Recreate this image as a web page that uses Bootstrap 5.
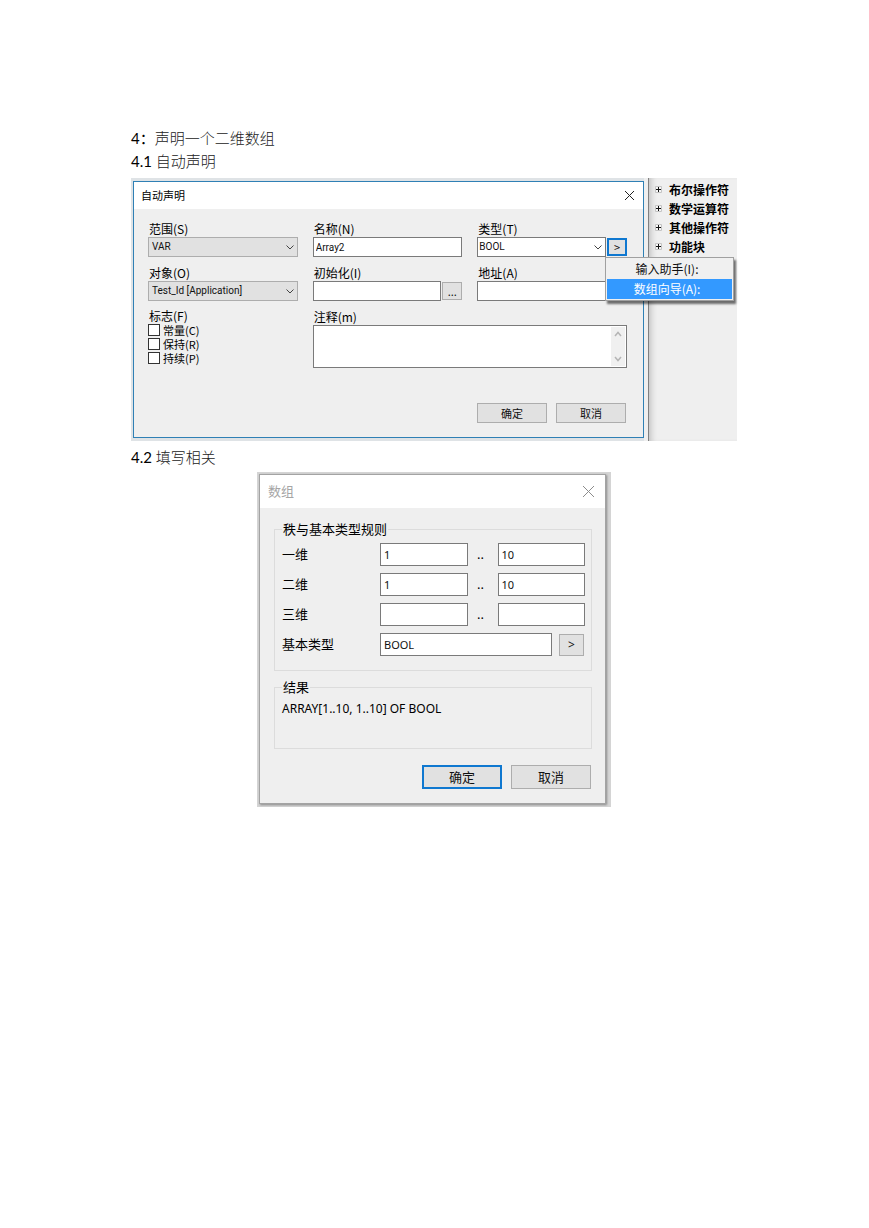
<!DOCTYPE html>
<html lang="zh-CN">
<head>
<meta charset="utf-8">
<meta name="viewport" content="width=device-width, initial-scale=1">
<title>声明一个二维数组</title>
<link href="https://cdn.jsdelivr.net/npm/bootstrap@5.3.0/dist/css/bootstrap.min.css" rel="stylesheet">
<style>
  body { background: #fff; color: #000; font-family: "Noto Sans", "Noto Sans CJK SC", sans-serif; font-size: 12px; }
  .doc-page { max-width: 869px; padding: 127px 132px 127px 131px; }
  .doc-line { font-family: Lato, "Noto Sans CJK SC", sans-serif; font-size: 15px; line-height: 23px; font-weight: 400; margin: 0; }
  .doc-line span { font-weight: 300; color: #222; }
  .doc-line.after-shot { margin-top: 5px; }

  .win input, .win select, .win textarea, .win button { font-family: inherit; color: #111; border-radius: 0; }
  .win label, .win legend { color: #000; }
  .win-title { background: #fff; }
  .win-x { border: 0; background: none; padding: 0; line-height: 0; }
  .push { background: #e1e1e1; border: 1px solid #adadad; padding: 0; }
  .push.is-default { border: 2px solid #0f78d0; }
  .acts { gap: 9px; padding-right: 1px; }

  /* declaration dialog beside the operator tree */
  .shot-wide { background: #efefef; margin-top: 5px; font-family: "Noto Sans CJK SC", sans-serif; }
  .declare-edge { background: #dfe3e6; padding: 3px 0 3px 2px; }
  .declare { border: 1px solid #2f80b5; background: #efefef; height: 100%; }
  .declare .win-title { height: 27px; padding: 0 8px 0 7px; font-size: 11px; }
  .declare-body { padding: 12px 16px 14px 14px; }
  .declare-grid { display: grid; grid-template-columns: repeat(3, 1fr); column-gap: 15px; row-gap: 8px; }
  .declare-grid label, .cap { display: block; font-size: 12px; line-height: 16px; padding-left: 1px; }
  .declare-grid .cap { line-height: 14px; }
  .span-2 { grid-column: span 2; }
  .declare input[type=text], .declare select { height: 20px; font-family: Roboto, "Noto Sans CJK SC", sans-serif; font-size: 10px; line-height: 18px; padding: 0 2px; border: 1px solid #7a7a7a; background-color: #fff; }
  .declare select { appearance: none; background-repeat: no-repeat; background-position: right 3px center; background-size: 8px 5px;
    background-image: url("data:image/svg+xml,%3Csvg xmlns='http://www.w3.org/2000/svg' viewBox='0 0 8 5'%3E%3Cpath d='M.5.5 4 4 7.5.5' fill='none' stroke='%23444'/%3E%3C/svg%3E"); }
  .declare select.grey { background-color: #e1e1e1; border-color: #adadad; padding-left: 3px; }
  .declare select.combo { padding-left: 1px; }
  .with-more { gap: 1px; }
  .more { width: 20px; height: 18px; font-size: 11px; line-height: 14px; }
  .tick { height: 14px; }
  .tick input { appearance: none; width: 12px; height: 12px; margin: 0 3px 0 0; border: 1px solid #333; background: #fff; }
  .declare .tick label { line-height: 14px; font-size: 11px; padding: 0; }
  .note { border: 1px solid #7a7a7a; background: #fff; height: 43px; padding: 1px; }
  .note textarea { border: 0; resize: none; outline: 0; overflow: hidden; }
  .note-bar { width: 14px; background: #f0f0f0; padding: 4px 0; }
  .declare .push.act { width: 70px; height: 20px; font-size: 11px; line-height: 16px; }
  .declare-acts { margin-top: 35px; }

  .pop-menu { position: absolute; top: 19px; left: -2px; width: 129px; z-index: 5; background: #f0f0f0; border: 1px solid #a0a0a0; padding: 1px; box-shadow: 2px 3px 2px rgba(0,0,0,.55); }
  .pop-menu button { display: block; width: 100%; height: 20px; border: 0; background: none; padding: 0 5px 0 0; font-size: 12px; line-height: 18px; text-align: center; }
  .pop-menu button.on { background: #3399ff; color: #fff; }

  .tree { width: 89px; margin-left: 4px; border-left: 1px solid #808080; padding: 2px 0 0 6px; box-shadow: inset 6px 0 6px -4px rgba(0,0,0,.2); }
  .tree li { height: 19px; font-size: 12px; line-height: 19px; font-weight: 700; }
  .tree svg { margin-right: 7px; }

  /* array dialog */
  .shot-array { width: 354px; background: #d4d4d4; padding: 2px 5px 3px 2px; margin-top: 3px; }
  .arr { border: 1px solid #a3a3a3; background: #efefef; box-shadow: 1px 1px 2px rgba(0,0,0,.35); }
  .arr .win-title { height: 33px; padding: 0 10px 0 8px; font-size: 13px; color: #a5a5a5; }
  .arr-body { padding: 11px 13px 14px 14px; font-size: 13px; }
  .group { border: 1px solid #dcdcdc; padding: 3px 6px 0 7px; }
  .group legend { float: none; width: auto; font-size: 13px; line-height: 20px; height: 20px; margin: 0; padding: 0 1px; }
  .group.rules { padding-top: 4px; padding-bottom: 14px; }
  .group.outcome { margin-top: 6px; }
  .group-row { height: 23px; }
  .group-row + .group-row { margin-top: 7px; }
  .group-row > label { width: 98px; flex: none; }
  .group input { height: 23px; border: 1px solid #7a7a7a; background: #fff; font-size: 11px; padding: 0 3px; min-width: 0; }
  .dots { width: 30px; text-align: center; padding-right: 4px; flex: none; }
  .pick { width: 25px; height: 22px; margin: 0 1px 0 7px; font-size: 12px; line-height: 18px; }
  .result { font-size: 12px; line-height: 18px; height: 48px; }
  .arr .push.act { width: 80px; height: 24px; font-size: 13px; line-height: 18px; }
</style>
</head>
<body>
<main class="doc-page mx-auto">
  <h1 class="doc-line">4：<span>声明一个二维数组</span></h1>
  <h2 class="doc-line">4.1 <span>自动声明</span></h2>

  <section class="shot-wide win d-flex">
    <div class="declare-edge flex-grow-1">
      <form class="declare">
        <div class="win-title d-flex align-items-center justify-content-between">
          <span>自动声明</span>
          <button type="button" class="win-x" aria-label="关闭"><svg width="11" height="11" viewBox="0 0 11 11"><path d="M1 1l9 9M10 1l-9 9" stroke="#222" fill="none"/></svg></button>
        </div>
        <div class="declare-body">
          <div class="declare-grid">
            <div>
              <label for="scope">范围(S)</label>
              <select id="scope" class="grey w-100 d-block"><option>VAR</option></select>
            </div>
            <div>
              <label for="name">名称(N)</label>
              <input type="text" id="name" class="w-100 d-block" value="Array2">
            </div>
            <div>
              <label for="type">类型(T)</label>
              <div class="d-flex align-items-center with-more">
                <select id="type" class="combo flex-grow-1"><option>BOOL</option></select>
                <div class="position-relative d-flex">
                  <button type="button" class="push is-default more">&gt;</button>
                  <div class="pop-menu">
                    <button type="button">输入助手(I):</button>
                    <button type="button" class="on">数组向导(A):</button>
                  </div>
                </div>
              </div>
            </div>
            <div>
              <label for="object">对象(O)</label>
              <select id="object" class="grey w-100 d-block"><option>Test_Id [Application]</option></select>
            </div>
            <div>
              <label for="init">初始化(I)</label>
              <div class="d-flex align-items-center with-more">
                <input type="text" id="init" class="flex-grow-1 w-100"><button type="button" class="push more flex-shrink-0">...</button>
              </div>
            </div>
            <div>
              <label for="addr">地址(A)</label>
              <div class="d-flex align-items-center with-more">
                <input type="text" id="addr" class="flex-grow-1 w-100"><button type="button" class="push more flex-shrink-0">...</button>
              </div>
            </div>
            <div>
              <span class="cap">标志(F)</span>
              <div class="tick d-flex align-items-center"><input type="checkbox" id="const"><label for="const">常量(C)</label></div>
              <div class="tick d-flex align-items-center"><input type="checkbox" id="retain"><label for="retain">保持(R)</label></div>
              <div class="tick d-flex align-items-center"><input type="checkbox" id="persist"><label for="persist">持续(P)</label></div>
            </div>
            <div class="span-2">
              <label for="note">注释(m)</label>
              <div class="note d-flex">
                <textarea id="note" class="flex-grow-1"></textarea>
                <div class="note-bar d-flex flex-column justify-content-between align-items-center">
                  <svg width="8" height="6" viewBox="0 0 8 6"><path d="M1 5l3-3.500 3 3.500" fill="none" stroke="#b5b5b5" stroke-width="1.500"/></svg>
                  <svg width="8" height="6" viewBox="0 0 8 6"><path d="M1 1l3 3.500 3-3.500" fill="none" stroke="#b5b5b5" stroke-width="1.500"/></svg>
                </div>
              </div>
            </div>
          </div>
          <div class="declare-acts acts d-flex justify-content-end">
            <button type="button" class="push act">确定</button>
            <button type="button" class="push act">取消</button>
          </div>
        </div>
      </form>
    </div>
    <ul class="tree list-unstyled mb-0 flex-shrink-0">
      <li class="d-flex align-items-center"><svg width="7" height="7" viewBox="0 0 7 7"><path d="M.5.5h6v6h-6z" fill="#f6f6f6" stroke="#c4c4c4"/><path d="M1 3.500h5M3.500 1v5" stroke="#111"/></svg>布尔操作符</li>
      <li class="d-flex align-items-center"><svg width="7" height="7" viewBox="0 0 7 7"><path d="M.5.5h6v6h-6z" fill="#f6f6f6" stroke="#c4c4c4"/><path d="M1 3.500h5M3.500 1v5" stroke="#111"/></svg>数学运算符</li>
      <li class="d-flex align-items-center"><svg width="7" height="7" viewBox="0 0 7 7"><path d="M.5.5h6v6h-6z" fill="#f6f6f6" stroke="#c4c4c4"/><path d="M1 3.500h5M3.500 1v5" stroke="#111"/></svg>其他操作符</li>
      <li class="d-flex align-items-center"><svg width="7" height="7" viewBox="0 0 7 7"><path d="M.5.5h6v6h-6z" fill="#f6f6f6" stroke="#c4c4c4"/><path d="M1 3.500h5M3.500 1v5" stroke="#111"/></svg>功能块</li>
    </ul>
  </section>

  <h2 class="doc-line after-shot">4.2 <span>填写相关</span></h2>

  <section class="shot-array win mx-auto">
    <form class="arr">
      <div class="win-title d-flex align-items-center justify-content-between">
        <span>数组</span>
        <button type="button" class="win-x" aria-label="关闭"><svg width="13" height="13" viewBox="0 0 13 13"><path d="M1 1l11 11M12 1L1 12" stroke="#8c8c8c" fill="none"/></svg></button>
      </div>
      <div class="arr-body">
        <fieldset class="group rules">
          <legend>秩与基本类型规则</legend>
          <div class="group-row d-flex align-items-center">
            <label for="d1a">一维</label><input type="text" id="d1a" class="w-100" value="1"><span class="dots">..</span><input type="text" class="w-100" aria-label="一维上限" value="10">
          </div>
          <div class="group-row d-flex align-items-center">
            <label for="d2a">二维</label><input type="text" id="d2a" class="w-100" value="1"><span class="dots">..</span><input type="text" class="w-100" aria-label="二维上限" value="10">
          </div>
          <div class="group-row d-flex align-items-center">
            <label for="d3a">三维</label><input type="text" id="d3a" class="w-100"><span class="dots">..</span><input type="text" class="w-100" aria-label="三维上限">
          </div>
          <div class="group-row d-flex align-items-center">
            <label for="base">基本类型</label><input type="text" id="base" class="w-100" value="BOOL"><button type="button" class="push pick flex-shrink-0">&gt;</button>
          </div>
        </fieldset>
        <fieldset class="group outcome">
          <legend>结果</legend>
          <div class="result">ARRAY[1..10, 1..10] OF BOOL</div>
        </fieldset>
        <div class="acts d-flex justify-content-end mt-3">
          <button type="button" class="push act is-default">确定</button>
          <button type="button" class="push act">取消</button>
        </div>
      </div>
    </form>
  </section>
</main>
<script src="https://cdn.jsdelivr.net/npm/bootstrap@5.3.0/dist/js/bootstrap.bundle.min.js"></script>
</body>
</html>
